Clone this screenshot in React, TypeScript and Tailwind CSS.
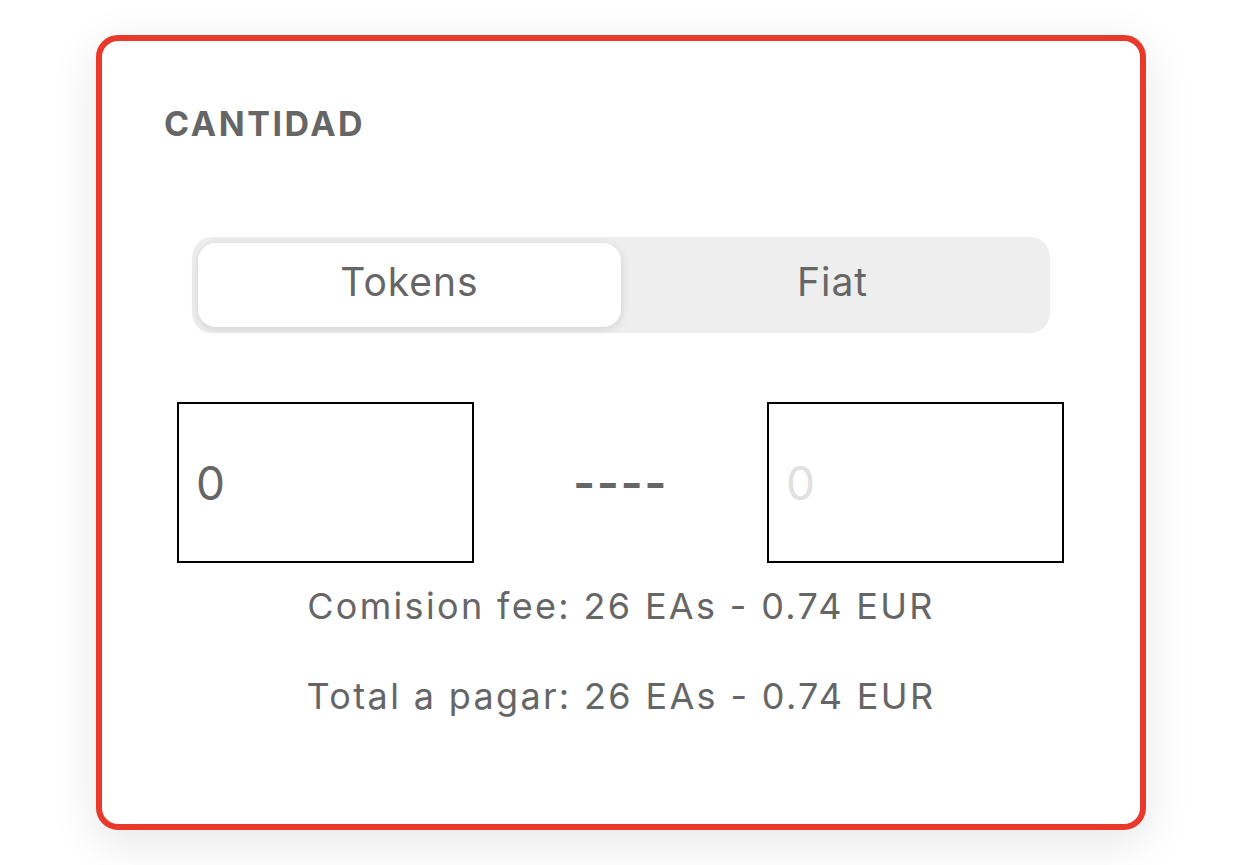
import { useState } from "react";

// Amount card: token / fiat toggle with two amount fields and fee summary
export default function App() {
    const [mode, setMode] = useState<"tokens" | "fiat">("tokens");
    const [amount, setAmount] = useState("0");
    const [fiat, setFiat] = useState("");

    const font = { fontFamily: "Inter, 'Noto Sans', sans-serif" };

    return (
        <div className="min-h-screen bg-white flex items-center justify-center" style={font}>
            <div className="w-[1050px] h-[795px] rounded-[22px] border-[6px] border-[#e8392b] bg-white shadow-[0_12px_48px_rgba(0,0,0,0.10)] flex flex-col px-[56px] pt-[66px]">
                <h2 className="text-[34px] leading-none font-bold tracking-[0.075em] text-[#666666] ml-[6px]">CANTIDAD</h2>

                <div className="mt-[96px] mx-auto w-[858px] h-[96px] rounded-[20px] bg-[#eeeeee] p-[6px] flex">
                    <button
                        onClick={() => setMode("tokens")}
                        className={`flex-1 rounded-[18px] text-[39px] leading-none tracking-[0.025em] pb-[7px] text-[#666666] ${mode === "tokens" ? "bg-white shadow-[0_2px_10px_rgba(0,0,0,0.12)]" : ""}`}
                    >
                        Tokens
                    </button>
                    <button
                        onClick={() => setMode("fiat")}
                        className={`flex-1 rounded-[18px] text-[39px] leading-none tracking-[0.025em] pb-[7px] text-[#666666] ${mode === "fiat" ? "bg-white shadow-[0_2px_10px_rgba(0,0,0,0.12)]" : ""}`}
                    >
                        Fiat
                    </button>
                </div>

                <div className="mt-[69px] ml-[19px] w-[887px] flex items-center justify-between">
                    <input
                        value={amount}
                        onChange={(e) => setAmount(e.target.value)}
                        className="w-[297px] h-[161px] border-2 border-black px-[17px] text-[46px] text-[#666666] outline-none"
                    />
                    <span className="text-[48px] leading-none text-[#666666] tracking-[0.03em] font-semibold">----</span>
                    <input
                        value={fiat}
                        placeholder="0"
                        onChange={(e) => setFiat(e.target.value)}
                        className="w-[297px] h-[161px] border-2 border-black px-[17px] text-[46px] text-[#666666] outline-none placeholder:text-[#e0e0e0]"
                    />
                </div>

                <p className="mt-[25px] text-center text-[36px] leading-none tracking-[0.065em] text-[#666666]">Comision fee: 26 EAs - 0.74 EUR</p>
                <p className="mt-[54px] text-center text-[36px] leading-none tracking-[0.065em] text-[#666666]">Total a pagar: 26 EAs - 0.74 EUR</p>
            </div>
        </div>
    );
}
